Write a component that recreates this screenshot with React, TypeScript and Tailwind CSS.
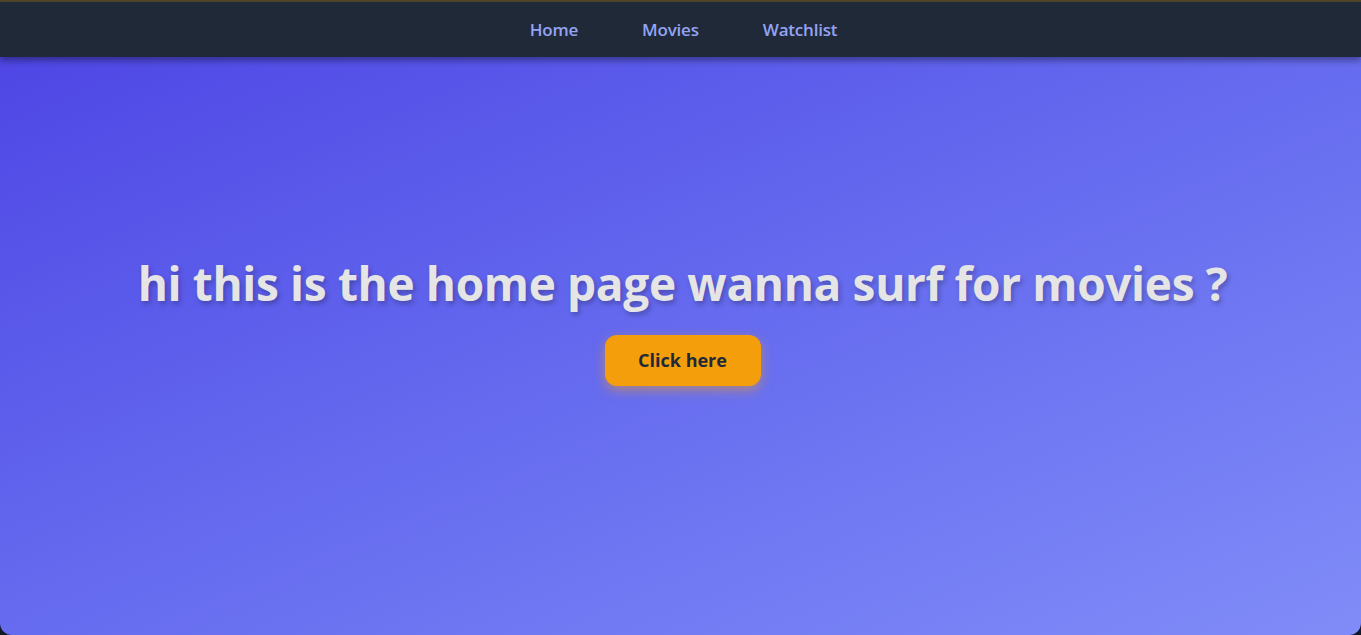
import React from "react";

export default function App() {
  return (
    <div
      className="min-h-[635px] h-[635px] flex flex-col bg-[#111827] overflow-hidden"
      style={{ fontFamily: '"Open Sans", "Noto Sans", sans-serif' }}
    >
      <div className="h-[2px] bg-[#4f4628]" />
      <nav className="h-[55px] bg-[#1f2937] flex items-center justify-center gap-16 pl-[6px] shadow-[0_4px_6px_rgba(0,0,0,0.35)] relative z-10">
        <a className="text-[17px] font-semibold text-[#94a3f4] tracking-[-0.2px]">Home</a>
        <a className="text-[17px] font-semibold text-[#94a3f4] tracking-[-0.2px]">Movies</a>
        <a className="text-[17px] font-semibold text-[#94a3f4] tracking-[-0.2px]">Watchlist</a>
      </nav>
      <main className="flex-1 bg-gradient-to-br from-[#4f46e5] to-[#818cf8] rounded-b-xl flex flex-col items-center justify-center gap-6 pb-[52px] pl-[4px]">
        <h1 className="text-[46px] font-bold text-[#e5e5e5] tracking-[-0.35px] leading-[56px] [text-shadow:2px_3px_5px_rgba(0,0,0,0.25)]">
          hi this is the home page wanna surf for movies ?
        </h1>
        <button className="w-[156px] h-[51px] rounded-xl bg-[#f59e0b] text-[#1f2937] text-lg font-bold shadow-[0_4px_12px_rgba(245,158,11,0.5)]">
          Click here
        </button>
      </main>
    </div>
  );
}
